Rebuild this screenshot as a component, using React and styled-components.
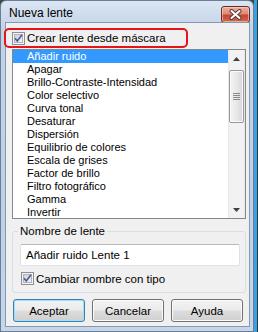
import React from "react";
import styled, { createGlobalStyle } from "styled-components";

const GlobalStyle = createGlobalStyle`
  html, body {
    margin: 0;
    padding: 0;
    background: linear-gradient(90deg, #3f4a3e 0, #3f4a3e 254px, #3aa0e2 254px, #3aa0e2 257px, #2f3a32 257px);
  }
  body {
    font-family: "Liberation Sans", Arial, sans-serif;
    font-size: 11px;
    color: #000;
  }
`;

const items = [
  "Añadir ruido",
  "Apagar",
  "Brillo-Contraste-Intensidad",
  "Color selectivo",
  "Curva tonal",
  "Desaturar",
  "Dispersión",
  "Equilibrio de colores",
  "Escala de grises",
  "Factor de brillo",
  "Filtro fotográfico",
  "Gamma",
  "Invertir",
];

const Window = styled.div`
  width: 254px;
  height: 332px;
  box-sizing: border-box;
  display: flex;
  flex-direction: column;
  padding: 0 3px 4px 4px;
  border: 1px solid #6c7e96;
  border-radius: 6px 6px 0 0;
  background: linear-gradient(180deg, #dbe6f3 0%, #c4d4e8 8%, #bfd0e6 60%, #c6d6ea 100%);
`;

const TitleBar = styled.div`
  height: 21px;
  display: flex;
  align-items: flex-start;
  justify-content: space-between;
  padding-left: 4px;
`;

const Title = styled.div`
  font-size: 12px;
  line-height: 15px;
  padding-top: 5px;
  color: #000;
`;

const CloseButton = styled.div`
  width: 29px;
  height: 17px;
  margin-top: 5px;
  box-sizing: border-box;
  border: 1px solid #6e2a22;
  border-radius: 3px;
  background: linear-gradient(180deg, #e9b0a4 0%, #db8a78 45%, #c6472f 55%, #cf6a52 100%);
  box-shadow: inset 0 0 0 1px rgba(255, 220, 210, 0.55);
  display: flex;
  align-items: center;
  justify-content: center;
`;

const Body = styled.div`
  flex: 1;
  display: flex;
  flex-direction: column;
  border: 1px solid #8799b1;
  background: #f0f0f0;
  padding: 5px 3px 0 6px;
`;

const MarkedRow = styled.div`
  display: flex;
  align-items: center;
  gap: 2px;
  width: 184px;
  height: 20px;
  box-sizing: border-box;
  margin-left: -8px;
  padding-left: 6px;
  border: 2px solid #e3141c;
  border-radius: 5px;
  font-size: 11.5px;
`;

const ListBox = styled.div`
  display: flex;
  height: 170px;
  box-sizing: border-box;
  margin-top: 1px;
  border: 1px solid #828790;
  background: #fff;
  overflow: hidden;
`;

const Items = styled.div`
  flex: 1;
  display: flex;
  flex-direction: column;
`;

const Item = styled.div`
  flex: none;
  height: 13px;
  line-height: 13px;
  padding-left: 14px;
  white-space: nowrap;
  background: ${(p) => (p.$selected ? "#3399ff" : "transparent")};
  color: ${(p) => (p.$selected ? "#fff" : "#000")};
`;

const ScrollBar = styled.div`
  width: 17px;
  display: flex;
  flex-direction: column;
  background: linear-gradient(90deg, #e6e6e6 0, #f2f2f2 2px, #f2f2f2 15px, #e6e6e6 17px);
`;

const ArrowButton = styled.div`
  height: 17px;
  display: flex;
  align-items: center;
  justify-content: center;
`;

const Track = styled.div`
  flex: 1;
  display: flex;
  flex-direction: column;
`;

const Thumb = styled.div`
  height: 53px;
  margin: 3px 0 0 1px;
  width: 15px;
  box-sizing: border-box;
  border: 1px solid #979797;
  border-radius: 2px;
  background: linear-gradient(90deg, #f4f4f4 0%, #e8e8e8 50%, #d6d6d6 100%);
  box-shadow: inset 0 0 0 1px #fbfbfb;
  display: flex;
  align-items: center;
  justify-content: center;
`;

const Group = styled.fieldset`
  margin: 6px 0 0 0;
  padding: 0 5px 7px 7px;
  border: 1px solid #d5dfe5;
  border-radius: 3px;
  min-width: 0;
`;

const Legend = styled.legend`
  padding: 0 2px;
  margin-left: -2px;
  font-size: 11.5px;
  line-height: 13px;
  color: #000;
`;

const TextInput = styled.div`
  margin-top: 6px;
  height: 22px;
  box-sizing: border-box;
  display: flex;
  align-items: center;
  padding-left: 5px;
  border: 1px solid #dde2e8;
  border-top-color: #b5b9c0;
  border-radius: 2px;
  background: #fff;
  font-size: 11.5px;
`;

const CheckRow = styled.div`
  display: flex;
  align-items: center;
  gap: 2px;
  margin-top: 6px;
  padding-left: 1px;
  font-size: 11.5px;
`;

const Buttons = styled.div`
  display: flex;
  justify-content: space-between;
  margin: 6px 3px 0 1px;
`;

const Button = styled.div`
  width: 72px;
  height: 23px;
  box-sizing: border-box;
  display: flex;
  align-items: center;
  justify-content: center;
  border: 1px solid ${(p) => (p.$default ? "#3c7fb1" : "#707070")};
  border-radius: 3px;
  background: linear-gradient(180deg, #f2f2f2 0%, #ebebeb 48%, #dddddd 52%, #cfcfcf 100%);
  box-shadow: inset 0 0 0 1px ${(p) => (p.$default ? "#9fe0f8" : "#fcfcfc")};
  font-size: 11.5px;
`;

const CheckBox = () => (
  <svg width="13" height="13" viewBox="0 0 13 13" style={{ flex: "none" }}>
    <defs>
      <linearGradient id="cbg" x1="0" y1="0" x2="1" y2="1">
        <stop offset="0" stopColor="#cbcfd5" />
        <stop offset="1" stopColor="#f6f6f6" />
      </linearGradient>
    </defs>
    <rect x="0.5" y="0.5" width="12" height="12" fill="#f4f4f4" stroke="#8e8f8f" />
    <rect x="2.5" y="2.5" width="8" height="8" fill="url(#cbg)" stroke="#b0b3ba" />
    <path d="M3 6.2 L5.3 9 L10 2.8" fill="none" stroke="#4a5d9a" strokeWidth="1.7" />
  </svg>
);

const CloseX = () => (
  <svg width="13" height="11" viewBox="0 0 13 11">
    <path d="M2.5 2 L10.5 9 M10.5 2 L2.5 9" stroke="#5b3a36" strokeWidth="4" strokeLinecap="round" />
    <path d="M2.5 2 L10.5 9 M10.5 2 L2.5 9" stroke="#fff" strokeWidth="2" strokeLinecap="round" />
  </svg>
);

const Arrow = ({ down }) => (
  <svg width="7" height="4" viewBox="0 0 7 4">
    <path d={down ? "M0 0 H7 L3.5 4 Z" : "M0 4 H7 L3.5 0 Z"} fill="#404040" />
  </svg>
);

const Grip = () => (
  <svg width="7" height="7" viewBox="0 0 7 7">
    <path d="M0 0.5 H7 M0 2.5 H7 M0 4.5 H7 M0 6.5 H7" stroke="#8a8a8a" strokeWidth="1" />
  </svg>
);

export default function App() {
  return (
    <>
      <GlobalStyle />
      <Window>
        <TitleBar>
          <Title>Nueva lente</Title>
          <CloseButton>
            <CloseX />
          </CloseButton>
        </TitleBar>
        <Body>
          <MarkedRow>
            <CheckBox />
            Crear lente desde máscara
          </MarkedRow>
          <ListBox>
            <Items>
              {items.map((name, i) => (
                <Item key={name} $selected={i === 0}>
                  {name}
                </Item>
              ))}
            </Items>
            <ScrollBar>
              <ArrowButton>
                <Arrow />
              </ArrowButton>
              <Track>
                <Thumb>
                  <Grip />
                </Thumb>
              </Track>
              <ArrowButton>
                <Arrow down />
              </ArrowButton>
            </ScrollBar>
          </ListBox>
          <Group>
            <Legend>Nombre de lente</Legend>
            <TextInput>Añadir ruido Lente 1</TextInput>
            <CheckRow>
              <CheckBox />
              Cambiar nombre con tipo
            </CheckRow>
          </Group>
          <Buttons>
            <Button $default>Aceptar</Button>
            <Button>Cancelar</Button>
            <Button>Ayuda</Button>
          </Buttons>
        </Body>
      </Window>
    </>
  );
}
